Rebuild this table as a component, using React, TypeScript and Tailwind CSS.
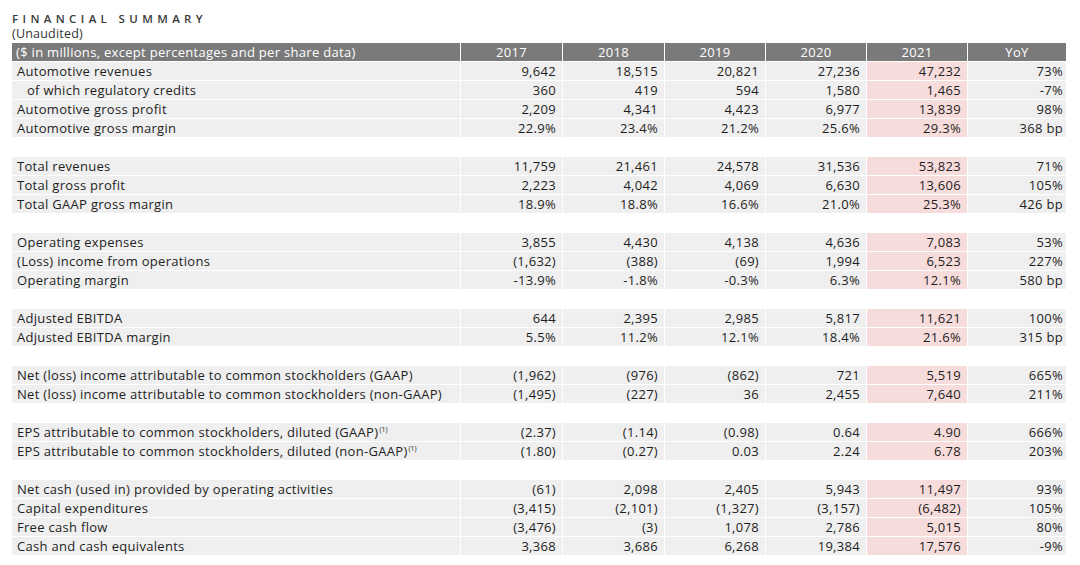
import React from "react";

type Row = { label: React.ReactNode; indent?: boolean; v: string[] } | null;

const sup = <span className="text-[7px] leading-[7px] relative -top-[5px] ml-[1px] tracking-normal">(1)</span>;

const rows: Row[] = [
  { label: "Automotive revenues", v: ["9,642", "18,515", "20,821", "27,236", "47,232", "73%"] },
  { label: "of which regulatory credits", indent: true, v: ["360", "419", "594", "1,580", "1,465", "-7%"] },
  { label: "Automotive gross profit", v: ["2,209", "4,341", "4,423", "6,977", "13,839", "98%"] },
  { label: "Automotive gross margin", v: ["22.9%", "23.4%", "21.2%", "25.6%", "29.3%", "368 bp"] },
  null,
  { label: "Total revenues", v: ["11,759", "21,461", "24,578", "31,536", "53,823", "71%"] },
  { label: "Total gross profit", v: ["2,223", "4,042", "4,069", "6,630", "13,606", "105%"] },
  { label: "Total GAAP gross margin", v: ["18.9%", "18.8%", "16.6%", "21.0%", "25.3%", "426 bp"] },
  null,
  { label: "Operating expenses", v: ["3,855", "4,430", "4,138", "4,636", "7,083", "53%"] },
  { label: "(Loss) income from operations", v: ["(1,632)", "(388)", "(69)", "1,994", "6,523", "227%"] },
  { label: "Operating margin", v: ["-13.9%", "-1.8%", "-0.3%", "6.3%", "12.1%", "580 bp"] },
  null,
  { label: "Adjusted EBITDA", v: ["644", "2,395", "2,985", "5,817", "11,621", "100%"] },
  { label: "Adjusted EBITDA margin", v: ["5.5%", "11.2%", "12.1%", "18.4%", "21.6%", "315 bp"] },
  null,
  { label: "Net (loss) income attributable to common stockholders (GAAP)", v: ["(1,962)", "(976)", "(862)", "721", "5,519", "665%"] },
  { label: "Net (loss) income attributable to common stockholders (non-GAAP)", v: ["(1,495)", "(227)", "36", "2,455", "7,640", "211%"] },
  null,
  { label: <>EPS attributable to common stockholders, diluted (GAAP){sup}</>, v: ["(2.37)", "(1.14)", "(0.98)", "0.64", "4.90", "666%"] },
  { label: <>EPS attributable to common stockholders, diluted (non-GAAP){sup}</>, v: ["(1.80)", "(0.27)", "0.03", "2.24", "6.78", "203%"] },
  null,
  { label: "Net cash (used in) provided by operating activities", v: ["(61)", "2,098", "2,405", "5,943", "11,497", "93%"] },
  { label: "Capital expenditures", v: ["(3,415)", "(2,101)", "(1,327)", "(3,157)", "(6,482)", "105%"] },
  { label: "Free cash flow", v: ["(3,476)", "(3)", "1,078", "2,786", "5,015", "80%"] },
  { label: "Cash and cash equivalents", v: ["3,368", "3,686", "6,268", "19,384", "17,576", "-9%"] },
];

const years = ["2017", "2018", "2019", "2020", "2021", "YoY"];

export default function App() {
  return (
    <div
      className="bg-white w-[1080px] h-[565px] overflow-hidden pl-[12px] pt-[11px] text-[#1e1e1e]"
      style={{ fontFamily: '"Open Sans", "Liberation Sans", sans-serif' }}
    >
      <div className="text-[11.5px] leading-[15px] font-semibold tracking-[0.38em] text-[#3a3a3a]">
        FINANCIAL SUMMARY
      </div>
      <div className="text-[12.5px] leading-[15px] tracking-[0.2px] text-[#333] mb-[2px]">(Unaudited)</div>
      <div className="grid grid-cols-[448px_101px_101px_100px_100px_100px_98px] gap-x-px gap-y-px text-[13px] leading-[18px] tracking-[0.3px]">
        <div className="bg-[#7a7a7a] text-white pl-[4px] h-[18px] whitespace-nowrap">
          ($ in millions, except percentages and per share data)
        </div>
        {years.map((y) => (
          <div key={y} className="bg-[#7a7a7a] text-white text-center h-[18px]">
            {y}
          </div>
        ))}
        {rows.map((r, i) =>
          r === null ? (
            <div key={i} className="col-span-7 h-[18px] bg-white" />
          ) : (
            <React.Fragment key={i}>
              <div className={`bg-[#efefef] h-[18px] whitespace-nowrap ${r.indent ? "pl-[15px]" : "pl-[5px]"}`}>
                {r.label}
              </div>
              {r.v.map((val, j) => (
                <div
                  key={j}
                  className={`h-[18px] text-right ${j === 4 ? "bg-[#f7dcdc] pr-[6px]" : j === 5 ? "bg-[#efefef] pr-[3px]" : "bg-[#efefef] pr-[6px]"}`}
                >
                  {val}
                </div>
              ))}
            </React.Fragment>
          )
        )}
      </div>
      <div className="mt-[7px] pl-[5px] text-[12px] leading-[18px] text-[#c8c8c8]">
        EPS and share data reflect the five-for-one stock split
      </div>
    </div>
  );
}
